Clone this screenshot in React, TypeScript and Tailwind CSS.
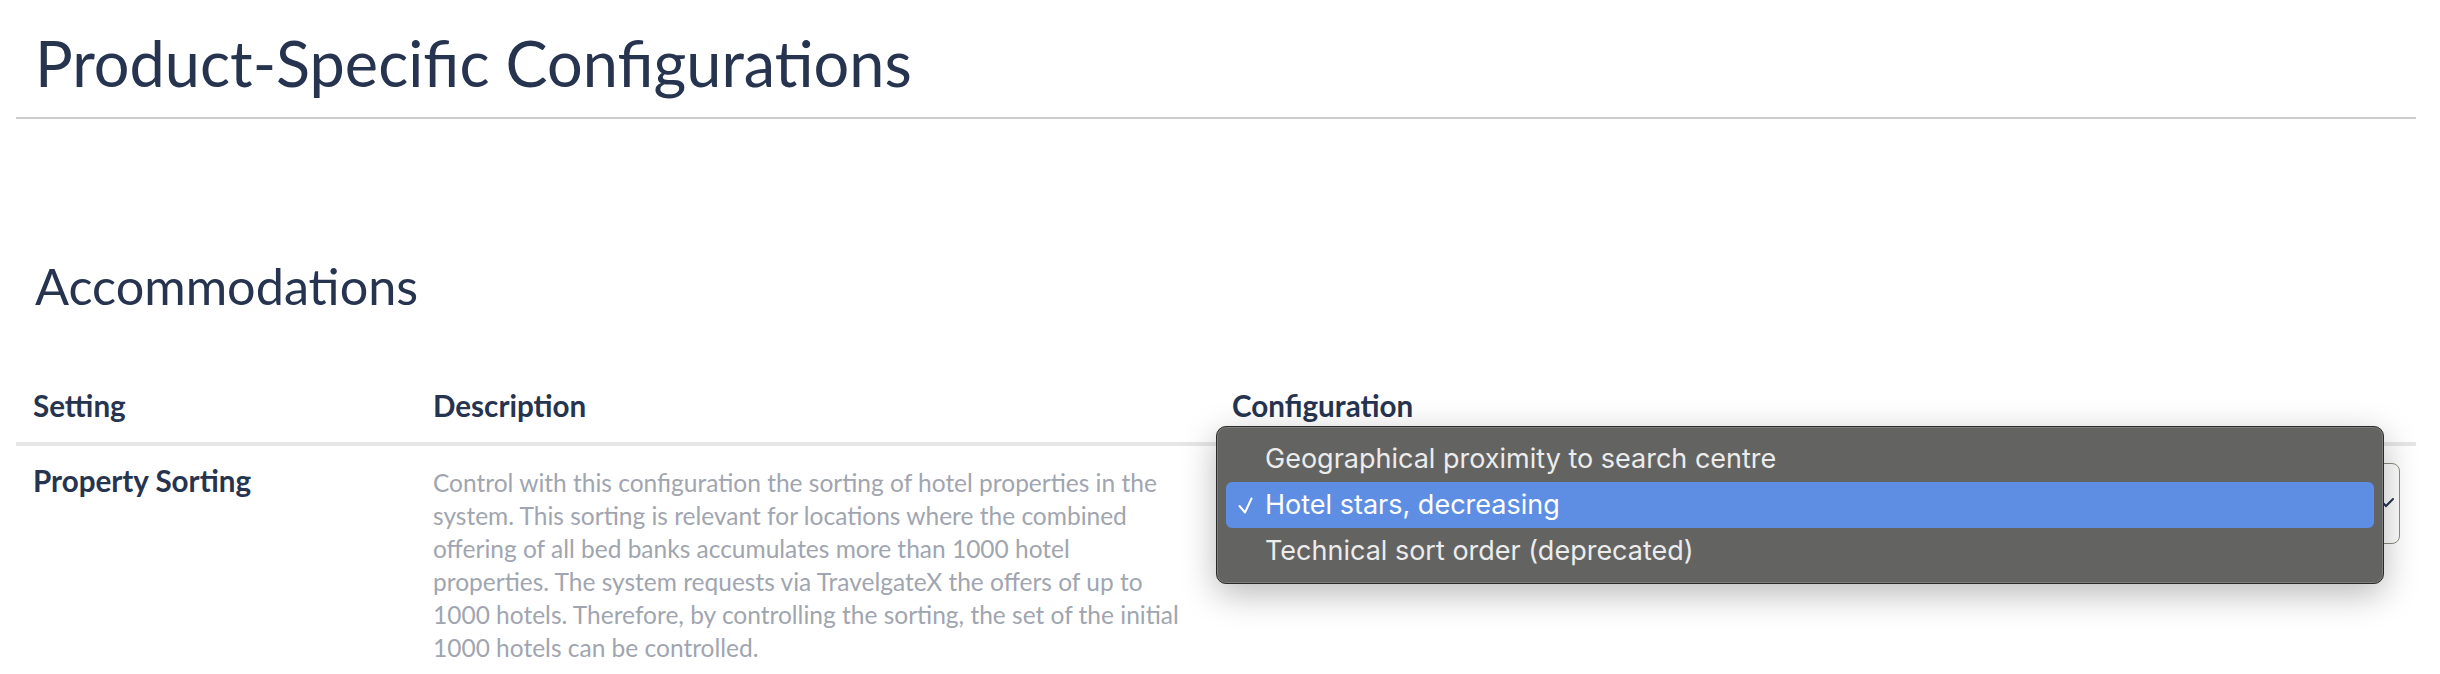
import React from "react";

const descLines = [
  "Control with this configuration the sorting of hotel properties in the",
  "system. This sorting is relevant for locations where the combined",
  "offering of all bed banks accumulates more than 1000 hotel",
  "properties. The system requests via TravelgateX the offers of up to",
  "1000 hotels. Therefore, by controlling the sorting, the set of the initial",
  "1000 hotels can be controlled.",
];

export default function App() {
  return (
    <div className="min-h-screen bg-white pl-4 pr-6 font-['Lato','Noto_Sans',sans-serif] text-[#27344f]">
      <h1 className="pl-[19px] pt-[25px] pb-[16px] text-[63px] leading-[76px] font-normal">
        Product-Specific Configurations
      </h1>
      <div className="h-[2px] bg-[#cccccc]" />
      <h2 className="pl-[19px] pt-[137px] text-[50.4px] leading-[60px] font-normal">Accommodations</h2>

      <div className="mt-[72px] grid grid-cols-[400px_800px_1fr] border-b-4 border-[#e6e6e6] pb-[18px] text-[29.6px] leading-[36px] font-bold">
        <div className="pl-[17px]">Setting</div>
        <div className="pl-[17px]">Description</div>
        <div className="pl-[16px]">Configuration</div>
      </div>

      <div className="grid grid-cols-[400px_800px_1fr]">
        <div className="pl-[17px] pt-[17px] text-[29.6px] leading-[36px] font-bold">Property Sorting</div>
        <div className="pl-[17px] pt-[20px] text-[24.5px] leading-[33px] text-[#a0a5b0] whitespace-nowrap">
          {descLines.map((l, i) => (
            <div key={i}>{l}</div>
          ))}
        </div>
        <div className="px-4 pt-[17px]">
          <div className="relative h-[81px] rounded-[8px] border border-[#8f8d7f] bg-white">
            <svg
              className="absolute right-[5px] top-[30px]"
              width="16"
              height="14"
              viewBox="0 0 16 14"
              fill="none"
              stroke="#27344f"
              strokeWidth="2"
              strokeLinecap="round"
            >
              <path d="M1 5l7 7 7-7" />
            </svg>

            <div className="absolute left-[-17px] top-[-38px] w-[1168px] rounded-[10px] border border-[#2a2a2a] bg-[#636362] px-[9px] py-[9px] shadow-[inset_0_0_0_1px_rgba(255,255,255,0.18),0_10px_35px_rgba(0,0,0,0.28)] font-['Inter','Liberation_Sans',sans-serif] text-[27px] text-[#ececec]">
              <div className="flex h-[46px] items-center rounded-[6px] pl-[39px]">Geographical proximity to search centre</div>
              <div className="flex h-[46px] items-center rounded-[6px] bg-[#5e8ee4] text-white">
                <span className="flex w-[39px] pl-[12px]">
                  <svg width="15" height="17" viewBox="0 0 15 17" fill="none" stroke="#ffffff" strokeWidth="2" strokeLinecap="round" strokeLinejoin="round">
                    <path d="M1.5 9l5.5 6.5L13.5 1.5" />
                  </svg>
                </span>
                <span>Hotel stars, decreasing</span>
              </div>
              <div className="flex h-[46px] items-center rounded-[6px] pl-[39px]">Technical sort order (deprecated)</div>
            </div>
          </div>
        </div>
      </div>
    </div>
  );
}
